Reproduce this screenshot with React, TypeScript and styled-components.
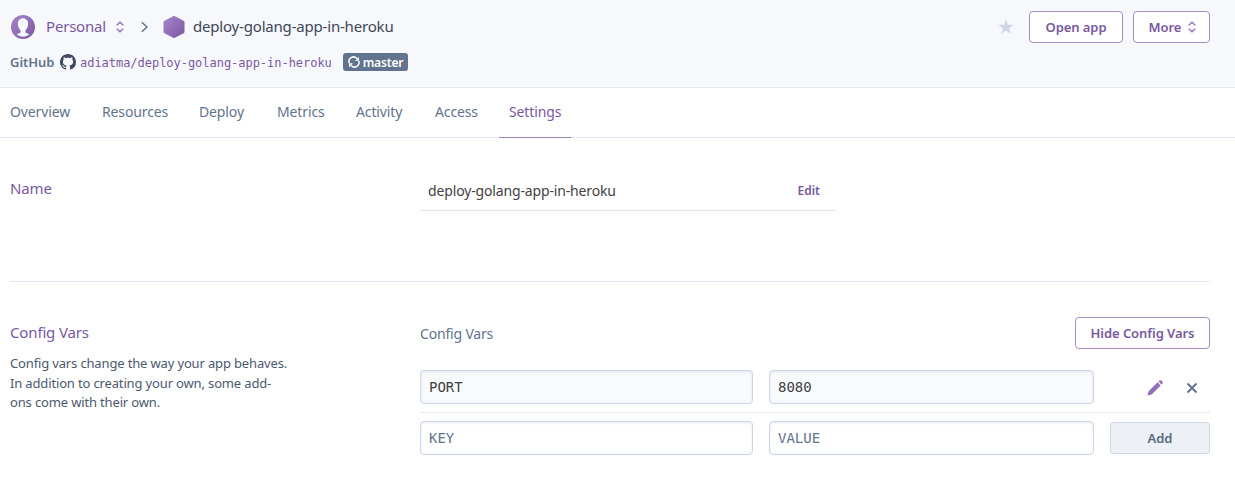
import React from 'react';
import styled, { createGlobalStyle } from 'styled-components';

const sans = `'Noto Sans', 'Open Sans', sans-serif`;
const mono = `'DejaVu Sans Mono', 'Liberation Mono', monospace`;
const purple = '#79589f';
const slate = '#62738d';

const GlobalStyle = createGlobalStyle`
  * { box-sizing: border-box; }
  body { margin: 0; background: #fff; font-family: ${sans}; color: #3f3f44; }
  input, button { font-family: inherit; margin: 0; }
`;

const Page = styled.div`
  width: 100%;
  min-height: 481px;
`;

const Header = styled.header`
  height: 88px;
  padding: 11px 25px 0 10px;
  background: #f7f8fc;
  border-bottom: 1px solid #e3e8f1;
`;

const HeaderRow = styled.div`
  display: flex;
  align-items: center;
  height: 32px;
  svg { flex: none; }
`;

const Owner = styled.a`
  width: 59px;
  margin: 0 11px 2px 11px;
  font-size: 15px;
  letter-spacing: -0.2px;
  color: ${purple};
  white-space: nowrap;
`;

const AppTitle = styled.span`
  margin: 0 0 2px 8px;
  font-size: 15px;
  letter-spacing: -0.19px;
  color: #3f4654;
  white-space: nowrap;
`;

const Actions = styled.div`
  display: flex;
  align-items: center;
  margin-left: auto;
  gap: 10px;
`;

const OutlineButton = styled.button<{ $width: number }>`
  display: flex;
  align-items: center;
  justify-content: center;
  gap: 7px;
  width: ${p => p.$width}px;
  height: 32px;
  padding: 0;
  border: 1px solid #a88bc7;
  border-radius: 4px;
  background: #fff;
  color: ${purple};
  font-size: 13px;
  font-weight: 600;
  letter-spacing: -0.06px;
  white-space: nowrap;
`;

const MoreButton = styled(OutlineButton)`
  padding-left: 2px;
`;

const RepoRow = styled.div`
  display: flex;
  align-items: center;
  height: 20px;
  margin-top: 9px;
  font-size: 13px;
  svg { flex: none; }
`;

const RepoLabel = styled.span`
  width: 45px;
  margin-right: 5px;
  font-weight: 600;
  letter-spacing: -0.05px;
  color: ${slate};
`;

const RepoLink = styled.a`
  width: 252px;
  margin: 2px 11px 0 4px;
  font-family: ${mono};
  font-size: 12px;
  letter-spacing: -0.03px;
  color: ${purple};
  white-space: nowrap;
`;

const Branch = styled.span`
  display: flex;
  align-items: center;
  justify-content: center;
  gap: 3px;
  width: 65px;
  height: 18px;
  border-radius: 3px;
  background: ${slate};
  color: #fff;
  font-size: 12px;
  font-weight: 600;
  letter-spacing: -0.15px;
`;

const Nav = styled.nav`
  display: flex;
  gap: 11px;
  height: 50px;
  border-bottom: 1px solid #e3e8f1;
`;

const Tab = styled.a<{ $width: number; $active: boolean }>`
  width: ${p => p.$width}px;
  height: 50px;
  padding-left: 10px;
  border-bottom: 1px solid ${p => (p.$active ? '#a080c4' : 'transparent')};
  color: ${p => (p.$active ? purple : slate)};
  font-size: 14px;
  line-height: 48px;
  letter-spacing: -0.13px;
  white-space: nowrap;
`;

const Content = styled.main`
  padding: 0 25px 0 10px;
`;

const NameSection = styled.section`
  display: grid;
  grid-template-columns: 410px 416px;
  align-items: start;
  height: 144px;
  padding-top: 34px;
  border-bottom: 1px solid #e3e8f1;
`;

const SectionTitle = styled.h2`
  margin: 0;
  font-size: 15px;
  line-height: 32px;
  font-weight: 400;
  letter-spacing: -0.15px;
  color: ${purple};
`;

const NameField = styled.div`
  display: flex;
  align-items: center;
  justify-content: space-between;
  height: 39px;
  padding: 0 16px 2px 8px;
  border-bottom: 1px solid #dfe4ef;
  font-size: 14px;
  letter-spacing: -0.15px;
`;

const EditLink = styled.a`
  font-size: 12px;
  font-weight: 600;
  letter-spacing: 0;
  color: ${purple};
`;

const ConfigSection = styled.section`
  display: grid;
  grid-template-columns: 410px 1fr;
  align-items: start;
  padding-top: 34px;
`;

const Description = styled.p`
  width: 290px;
  margin: 6px 0 0;
  font-size: 13px;
  line-height: 19.5px;
  letter-spacing: -0.15px;
  color: #4b596e;
`;

const PanelHeader = styled.div`
  display: flex;
  align-items: center;
  justify-content: space-between;
  height: 32px;
  margin: 1px 0 12px;
  font-size: 14px;
  letter-spacing: -0.18px;
  color: ${slate};
`;

const VarRow = styled.div`
  display: grid;
  grid-template-columns: 333px 325px 100px;
  gap: 16px;
  align-items: center;
  height: 51px;
  & + & { border-top: 1px solid #e6ebf3; }
`;

const Field = styled.input`
  width: 100%;
  height: 34px;
  padding: 0 8px;
  border: 1px solid #cdd5e8;
  border-radius: 4px;
  outline: none;
  background: #fff;
  box-shadow: inset 0 1px 3px rgba(120, 140, 190, 0.18);
  && { font-family: ${mono}; }
  font-size: 14px;
  color: #3f3f44;
  &::placeholder { color: ${slate}; opacity: 1; }
  &:read-only { background: #f9fafc; }
`;

const RowActions = styled.div`
  display: flex;
  align-items: center;
  justify-content: flex-end;
  gap: 23px;
  padding: 2px 12px 0 0;
`;

const AddButton = styled.button`
  height: 32px;
  border: 1px solid #cdd7e8;
  border-radius: 3px;
  background: #edf0f5;
  color: #586980;
  font-size: 13px;
  font-weight: 600;
`;

const Avatar = () => (
  <svg width="25" height="26" viewBox="0 0 25 26">
    <defs>
      <linearGradient id="avatar" x1="0" y1="0" x2="1" y2="1">
        <stop offset="0" stopColor="#a984cd" />
        <stop offset="1" stopColor="#79589f" />
      </linearGradient>
    </defs>
    <circle cx="13" cy="13" r="12" fill="url(#avatar)" />
    <path
      fill="#f7f8fc"
      d="M13 4.2c-3.2 0-5.1 2.3-5.1 5.5 0 2.7 1 5 2.6 6.3v1.7c0 .8-.5 1.3-1.3 1.6l-2.6 1c1.8 1.6 4 2.5 6.4 2.5s4.6-.9 6.4-2.5l-2.6-1c-.8-.3-1.3-.8-1.3-1.6V16c1.6-1.3 2.6-3.6 2.6-6.3 0-3.2-1.9-5.5-5.1-5.5z"
    />
  </svg>
);

const UpDown = () => (
  <svg width="8" height="12" viewBox="0 0 8 12" fill="none" stroke="#8c6bb1" strokeWidth="1.3">
    <path d="M.6 4.4 4 1.2l3.4 3.2M.6 7.6 4 10.8l3.4-3.2" />
  </svg>
);

const Chevron = styled.svg`
  margin: 0 15px 0 17px;
`;

const Hexagon = () => (
  <svg width="22" height="24" viewBox="0 0 22 24">
    <defs>
      <linearGradient id="hexagon" x1="0" y1="0" x2="1" y2="1">
        <stop offset="0" stopColor="#a984cd" />
        <stop offset="1" stopColor="#79589f" />
      </linearGradient>
    </defs>
    <path
      fill="url(#hexagon)"
      stroke="url(#hexagon)"
      strokeLinejoin="round"
      d="M11 1.3 21 6.5v11L11 22.7 1 17.5v-11z"
    />
  </svg>
);

const GitHubMark = () => (
  <svg width="16" height="16" viewBox="0 0 16 16" fill="#3f4b60">
    <path d="M8 0C3.58 0 0 3.58 0 8c0 3.54 2.29 6.53 5.47 7.59.4.07.55-.17.55-.38 0-.19-.01-.82-.01-1.49-2.01.37-2.53-.49-2.69-.94-.09-.23-.48-.94-.82-1.13-.28-.15-.68-.52-.01-.53.63-.01 1.08.58 1.23.82.72 1.21 1.87.87 2.33.66.07-.52.28-.87.51-1.07-1.78-.2-3.64-.89-3.64-3.95 0-.87.31-1.59.82-2.15-.08-.2-.36-1.02.08-2.12 0 0 .67-.21 2.2.82.64-.18 1.32-.27 2-.27s1.36.09 2 .27c1.53-1.04 2.2-.82 2.2-.82.44 1.1.16 1.92.08 2.12.51.56.82 1.27.82 2.15 0 3.07-1.87 3.75-3.65 3.95.29.25.54.73.54 1.48 0 1.07-.01 1.93-.01 2.2 0 .21.15.46.55.38A8.01 8.01 0 0 0 16 8c0-4.42-3.58-8-8-8z" />
  </svg>
);

const Star = styled.svg`
  margin-right: 5px;
`;

const Sync = () => (
  <svg width="12" height="12" viewBox="0 0 12 12" fill="none" stroke="#fff" strokeWidth="1.5">
    <path d="M1.3 7.2A4.5 4.5 0 0 1 8.8 2.5M10.7 4.8A4.5 4.5 0 0 1 3.2 9.5" />
    <path fill="#fff" stroke="none" d="M11 .7v4H7zM1 11.3v-4h4z" />
  </svg>
);

const Pencil = () => (
  <svg width="16" height="16" viewBox="0 0 16 16" fill="#9270b8">
    <path d="M.4 15.6 1.6 11.3 10.6 2.3l3.1 3.1-9 9zM11.5 1.5l.9-.9c.6-.6 1.3-.6 1.9 0l1.1 1.1c.6.6.6 1.3 0 1.9l-.9.9z" />
  </svg>
);

const Cross = () => (
  <svg width="12" height="12" viewBox="0 0 12 12" fill="none" stroke="#62738d" strokeWidth="2">
    <path d="M1.5 1.5l9 9M10.5 1.5l-9 9" />
  </svg>
);

const tabs: [string, number][] = [
  ['Overview', 81],
  ['Resources', 86],
  ['Deploy', 67],
  ['Metrics', 68],
  ['Activity', 68],
  ['Access', 63],
  ['Settings', 72],
];

export default function App() {
  return (
    <Page>
      <GlobalStyle />
      <Header>
        <HeaderRow>
          <Avatar />
          <Owner>Personal</Owner>
          <UpDown />
          <Chevron width="7" height="12" viewBox="0 0 7 12" fill="none" stroke={slate} strokeWidth="1.5">
            <path d="M.8 1.2 6 6 .8 10.8" />
          </Chevron>
          <Hexagon />
          <AppTitle>deploy-golang-app-in-heroku</AppTitle>
          <Actions>
            <Star width="16" height="16" viewBox="0 0 16 16" fill="#cdd6e7">
              <path d="M8 .3l1.85 5.5h5.85l-4.7 3.5 1.8 5.7L8 11.6l-4.8 3.4L5 9.3.3 5.8h5.85z" />
            </Star>
            <OutlineButton $width={94}>Open app</OutlineButton>
            <MoreButton $width={77}>
              More
              <UpDown />
            </MoreButton>
          </Actions>
        </HeaderRow>
        <RepoRow>
          <RepoLabel>GitHub</RepoLabel>
          <GitHubMark />
          <RepoLink>adiatma/deploy-golang-app-in-heroku</RepoLink>
          <Branch>
            <Sync />
            master
          </Branch>
        </RepoRow>
      </Header>
      <Nav>
        {tabs.map(([label, width]) => (
          <Tab key={label} $width={width} $active={label === 'Settings'}>
            {label}
          </Tab>
        ))}
      </Nav>
      <Content>
        <NameSection>
          <SectionTitle>Name</SectionTitle>
          <NameField>
            deploy-golang-app-in-heroku
            <EditLink>Edit</EditLink>
          </NameField>
        </NameSection>
        <ConfigSection>
          <div>
            <SectionTitle>Config Vars</SectionTitle>
            <Description>
              Config vars change the way your app behaves.
              <br />
              In addition to creating your own, some add-
              <br />
              ons come with their own.
            </Description>
          </div>
          <div>
            <PanelHeader>
              Config Vars
              <OutlineButton $width={135}>Hide Config Vars</OutlineButton>
            </PanelHeader>
            <VarRow>
              <Field readOnly defaultValue="PORT" />
              <Field readOnly defaultValue="8080" />
              <RowActions>
                <Pencil />
                <Cross />
              </RowActions>
            </VarRow>
            <VarRow>
              <Field placeholder="KEY" />
              <Field placeholder="VALUE" />
              <AddButton>Add</AddButton>
            </VarRow>
          </div>
        </ConfigSection>
      </Content>
    </Page>
  );
}
